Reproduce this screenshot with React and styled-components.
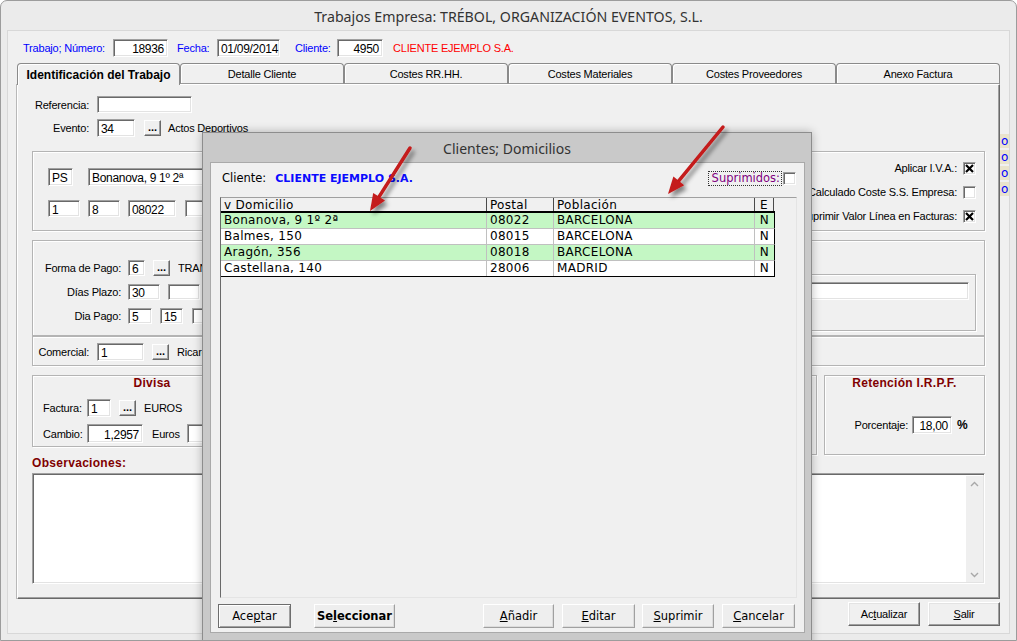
import React from "react";
import styled, { createGlobalStyle } from "styled-components";

const SANS = `"Liberation Sans", Arial, sans-serif`;
const TAHOMA = `"DejaVu Sans", Verdana, sans-serif`;
const UI = `"Noto Sans", "Open Sans", sans-serif`;

const GlobalStyle = createGlobalStyle`
  html, body { margin: 0; padding: 0; background: #ffffff; }
  body { font-family: ${SANS}; }
  *, *::before, *::after { box-sizing: border-box; }
`;

const Window = styled.div`
  position: relative;
  width: 1017px;
  height: 641px;
  background: #ebebeb;
  border: 1px solid #9c9c9c;
  border-radius: 7px 7px 0 0;
  overflow: hidden;
  display: flex;
  flex-direction: column;
`;

const TitleBar = styled.div`
  height: 30px;
  flex: none;
  display: flex;
  align-items: center;
  justify-content: center;
  font: 14.2px ${UI};
  color: #333;
`;

const ClientArea = styled.div`
  margin-left: 7px;
  width: 1001px;
  height: 602px;
  flex: none;
  background: #f0f0f0;
  box-shadow: 0 0 0 1px #d8d8d8;
  font: 11px ${SANS};
  letter-spacing: -0.2px;
  color: #000;
  display: flex;
  flex-direction: column;
`;

const HeaderRow = styled.div`
  display: flex;
  align-items: center;
  height: 18px;
  margin-top: 8px;
  padding-left: 15px;
`;

const LabelBox = styled.div`
  width: ${(p) => p.$w}px;
  flex: none;
  padding-left: ${(p) => p.$pl || 0}px;
  padding-right: ${(p) => p.$pr || 0}px;
  text-align: ${(p) => (p.$right ? "right" : "left")};
  color: ${(p) => p.$color || "#000"};
  white-space: nowrap;
`;

const Text = styled.span`
  margin-left: ${(p) => p.$ml || 0}px;
  color: ${(p) => p.$color || "#000"};
  font-weight: ${(p) => (p.$bold ? "bold" : "normal")};
  font-size: ${(p) => p.$size || 11}px;
  white-space: nowrap;
  flex: none;
  ${(p) => (p.$clip ? `width: ${p.$clip}px; overflow: hidden;` : "")}
`;

const Field = styled.div`
  width: ${(p) => p.$w}px;
  height: ${(p) => p.$h || 18}px;
  margin-left: ${(p) => p.$ml || 0}px;
  flex: none;
  background: #fff;
  border: 1px solid;
  border-color: #a0a0a0 #ffffff #ffffff #a0a0a0;
  box-shadow: inset 1px 1px 0 #696969, inset -1px -1px 0 #e3e3e3;
  display: flex;
  align-items: center;
  justify-content: ${(p) => (p.$right ? "flex-end" : "flex-start")};
  padding: 2px 3px 0 3px;
  font-size: 12px;
  letter-spacing: -0.3px;
  overflow: hidden;
  white-space: nowrap;
`;

const TabStrip = styled.div`
  display: flex;
  align-items: flex-start;
  height: 21px;
  margin-top: 6px;
  padding-left: 9px;
`;

const Tab = styled.div`
  width: ${(p) => p.$w}px;
  height: ${(p) => (p.$active ? 22 : 21)}px;
  flex: none;
  position: relative;
  z-index: ${(p) => (p.$active ? 2 : 1)};
  background: #f0f0f0;
  border: 1px solid #8a8a8a;
  border-bottom: ${(p) => (p.$active ? "none" : "1px solid #9a9a9a")};
  border-radius: 4px 4px 0 0;
  box-shadow: inset 1px 1px 0 #fff;
  display: flex;
  align-items: center;
  justify-content: center;
  font-size: ${(p) => (p.$active ? 12 : 11)}px;
  font-weight: ${(p) => (p.$active ? "bold" : "normal")};
  letter-spacing: ${(p) => (p.$active ? "0" : "-0.2px")};
  padding-top: ${(p) => (p.$active ? 1 : 0)}px;
`;

const PanelRow = styled.div`
  display: flex;
  align-items: flex-start;
`;

const Panel = styled.div`
  margin-left: 9px;
  width: 983px;
  height: 515px;
  flex: none;
  border-style: solid;
  border-width: 1px;
  border-color: #ffffff #696969 #696969 #ffffff;
  box-shadow: inset -1px -1px 0 #a0a0a0, -1px 0 0 #b8b8b8;
  padding: 11px 0 0 14px;
  display: flex;
  flex-direction: column;
`;

const Strip = styled.div`
  margin-left: 0;
  margin-top: 50px;
  width: 9px;
  display: flex;
  flex-direction: column;
  gap: 2px;
`;

const StripCell = styled.div`
  height: 14px;
  background: #e9e3cc;
  color: #0000ff;
  font: 12px ${TAHOMA};
  line-height: 14px;
  overflow: hidden;
  padding-left: 1px;
`;

const FormRow = styled.div`
  display: flex;
  align-items: center;
  height: ${(p) => p.$h || 18}px;
  margin-top: ${(p) => p.$mt || 0}px;
`;

const DotsBtn = styled.div`
  width: 17px;
  height: 16px;
  margin-left: ${(p) => p.$ml || 0}px;
  flex: none;
  background: #f0f0f0;
  border: 1px solid;
  border-color: #ffffff #696969 #696969 #ffffff;
  box-shadow: inset -1px -1px 0 #a0a0a0;
  font: bold 11px ${SANS};
  letter-spacing: 0;
  display: flex;
  align-items: flex-end;
  justify-content: center;
  line-height: 1;
  padding-bottom: 2px;
`;

const Group = styled.div`
  width: ${(p) => p.$w || 953}px;
  height: ${(p) => p.$h}px;
  margin-top: ${(p) => p.$mt || 0}px;
  margin-left: ${(p) => p.$ml || 0}px;
  flex: none;
  border: 1px solid #b4b4b4;
  box-shadow: inset 1px 1px 0 #fff, 1px 1px 0 #fff;
  display: flex;
  flex-direction: ${(p) => (p.$col ? "column" : "row")};
  justify-content: ${(p) => (p.$spread ? "space-between" : "flex-start")};
`;

const GroupCol = styled.div`
  display: flex;
  flex-direction: column;
  padding: ${(p) => p.$pad};
`;

const CheckRow = styled.div`
  display: flex;
  align-items: center;
  justify-content: flex-end;
  height: 24px;
`;

const CheckBox = styled.div`
  width: 13px;
  height: 13px;
  margin-left: ${(p) => p.$ml ?? 6}px;
  flex: none;
  background: #fff;
  border: 1px solid;
  border-color: #a0a0a0 #ffffff #ffffff #a0a0a0;
  box-shadow: inset 1px 1px 0 #696969, inset -1px -1px 0 #e3e3e3;
  display: flex;
  align-items: center;
  justify-content: center;
`;

const InnerBox = styled.div`
  width: 376px;
  height: 57px;
  margin: 33px 8px 0 auto;
  border: 1px solid #b4b4b4;
  box-shadow: inset 1px 1px 0 #fff, 1px 1px 0 #fff;
  padding: 7px 7px 0 15px;
  flex: none;
`;

const BottomRow = styled.div`
  display: flex;
  align-items: flex-start;
  margin-top: 9px;
`;

const GroupTitle = styled.div`
  height: 16px;
  line-height: 16px;
  text-align: center;
  font: bold 12px ${SANS};
  letter-spacing: 0.3px;
  color: #800000;
`;

const SectionLabel = styled.div`
  height: 14px;
  line-height: 14px;
  margin-top: 1px;
  font: bold 12px ${SANS};
  letter-spacing: 0.3px;
  color: #800000;
`;

const TextArea = styled.div`
  width: 953px;
  height: 111px;
  margin-top: 3px;
  background: #fff;
  border: 1px solid;
  border-color: #a0a0a0 #ffffff #ffffff #a0a0a0;
  box-shadow: inset 1px 1px 0 #696969, inset -1px -1px 0 #e3e3e3;
  display: flex;
  justify-content: flex-end;
  padding: 2px 1px 1px 2px;
`;

const ScrollBar = styled.div`
  width: 17px;
  background: #efefef;
  display: flex;
  flex-direction: column;
  justify-content: space-between;
  align-items: center;
  padding: 5px 0 4px;
`;

const ButtonBar = styled.div`
  display: flex;
  justify-content: flex-end;
  gap: 8px;
  padding-right: 9px;
  margin-top: 3px;
`;

const WinButton = styled.div`
  width: ${(p) => p.$w}px;
  height: 24px;
  background: #f0f0f0;
  border: 1px solid;
  border-color: #ffffff #696969 #696969 #ffffff;
  box-shadow: inset -1px -1px 0 #a0a0a0, inset 1px 1px 0 #e3e3e3;
  display: flex;
  align-items: center;
  justify-content: center;
  font-size: 11px;
`;

/* ---------- dialog ---------- */

const Dialog = styled.div`
  position: absolute;
  left: 201px;
  top: 131px;
  width: 610px;
  height: 520px;
  z-index: 5;
  background: #c9c9c9;
  border: 1px solid #8d8d8d;
  box-shadow: 0 0 9px rgba(0, 0, 0, 0.28);
  display: flex;
  flex-direction: column;
`;

const DialogTitle = styled.div`
  height: 29px;
  flex: none;
  display: flex;
  align-items: center;
  justify-content: center;
  font: 14px ${UI};
  color: #333;
  padding-top: 2px;
`;

const DialogBody = styled.div`
  margin-left: 7px;
  width: 595px;
  height: 471px;
  flex: none;
  background: #f0f0f0;
  border: 1px solid #a9a9a9;
  display: flex;
  flex-direction: column;
  font: 11.5px ${TAHOMA};
  color: #000;
`;

const DlgTop = styled.div`
  display: flex;
  align-items: center;
  justify-content: space-between;
  height: 16px;
  margin-top: 7px;
  padding: 0 8px 0 11px;
`;

const SideBox = styled.div`
  display: flex;
  align-items: center;
`;

const ClientName = styled.span`
  margin-left: 9px;
  font: bold 11px ${TAHOMA};
  color: #0a0aff;
`;

const FocusLabel = styled.div`
  width: 74px;
  height: 15px;
  border: 1px dotted #333;
  color: #800080;
  display: flex;
  align-items: center;
  justify-content: flex-end;
  padding-right: 1px;
`;

const GridBox = styled.div`
  width: 577px;
  height: 401px;
  margin: 11px 0 0 9px;
  flex: none;
  background: #f0f0f0;
  border: 1px solid;
  border-color: #a0a0a0 #e4e4e4 #e4e4e4 #696969;
`;

const GridRow = styled.div`
  display: grid;
  grid-template-columns: 266px 67px 201px 19px;
  width: 554px;
  height: ${(p) => (p.$head ? 15 : 16)}px;
  background: ${(p) => (p.$head ? "#f0f0f0" : p.$green ? "#c4f7c4" : "#ffffff")};
  border-bottom: ${(p) => (p.$head ? "2px solid #000" : p.$last ? "1px solid #000" : "1px solid #c0c0c0")};
  border-right: ${(p) => (p.$head ? "none" : "1px solid #000")};
  font-size: 12px;
  letter-spacing: 0.3px;
`;

const GridCell = styled.div`
  border-right: 1px solid ${(p) => (p.$head ? "#4a4a4a" : "#c0c0c0")};
  padding-left: ${(p) => (p.$center ? 0 : 3)}px;
  text-align: ${(p) => (p.$center ? "center" : "left")};
  line-height: 15px;
  white-space: nowrap;
  overflow: hidden;
  &:last-child {
    border-right: ${(p) => (p.$head ? "1px solid #4a4a4a" : "none")};
  }
`;

const DlgButtons = styled.div`
  display: flex;
  margin-top: 6px;
  padding-left: 7px;
`;

const DlgButton = styled.div`
  width: ${(p) => p.$w}px;
  height: 24px;
  margin-left: ${(p) => p.$ml || 0}px;
  flex: none;
  background: #eeeeee;
  border: 1px solid;
  border-color: ${(p) => (p.$default ? "#6d6d6d" : "#ffffff #a0a0a0 #a0a0a0 #ffffff")};
  box-shadow: ${(p) =>
    p.$default ? "inset 1px 1px 0 #fff, inset -1px -1px 0 #a0a0a0" : "inset -1px -1px 0 #dcdcdc"};
  display: flex;
  align-items: center;
  justify-content: center;
  font-weight: ${(p) => (p.$bold ? "bold" : "normal")};
  font-size: 11.5px;
`;

const ArrowLayer = styled.svg`
  position: absolute;
  left: -1px;
  top: -1px;
  z-index: 10;
  pointer-events: none;
`;

const XMark = () => (
  <svg width="9" height="9" viewBox="0 0 9 9">
    <path d="M1 1 L8 8 M8 1 L1 8" stroke="#000" strokeWidth="2.2" />
  </svg>
);

const Chevron = ({ up }) => (
  <svg width="9" height="6" viewBox="0 0 9 6">
    <path d={up ? "M1 5 L4.5 1.5 L8 5" : "M1 1 L4.5 4.5 L8 1"} stroke="#a8a8a8" strokeWidth="1.4" fill="none" />
  </svg>
);

function arrow(tx, ty, hx, hy) {
  const dx = hx - tx;
  const dy = hy - ty;
  const d = Math.hypot(dx, dy);
  const ux = dx / d;
  const uy = dy / d;
  const len = 17;
  const w = 7;
  const bx = hx - ux * len;
  const by = hy - uy * len;
  const px = -uy;
  const py = ux;
  return {
    line: `M${tx} ${ty} L${bx + ux * 2} ${by + uy * 2}`,
    head: `${hx},${hy} ${bx + px * w},${by + py * w} ${bx - px * w},${by - py * w}`,
  };
}

const Arrows = () => {
  const a1 = arrow(410, 148, 370, 211);
  const a2 = arrow(723, 127, 668, 194);
  return (
    <ArrowLayer width="1017" height="641" viewBox="0 0 1017 641">
      <defs>
        <filter id="sh" x="-50%" y="-50%" width="200%" height="200%">
          <feDropShadow dx="3" dy="4" stdDeviation="2" floodColor="#000" floodOpacity="0.45" />
        </filter>
      </defs>
      {[a1, a2].map((a, i) => (
        <g key={i} filter="url(#sh)">
          <path d={a.line} stroke="#c41a1a" strokeWidth="3.5" strokeLinecap="round" fill="none" />
          <polygon points={a.head} fill="#c41a1a" />
        </g>
      ))}
    </ArrowLayer>
  );
};

const rows = [
  ["Bonanova, 9 1º 2ª", "08022", "BARCELONA", "N"],
  ["Balmes, 150", "08015", "BARCELONA", "N"],
  ["Aragón, 356", "08018", "BARCELONA", "N"],
  ["Castellana, 140", "28006", "MADRID", "N"],
];

const tabs = [
  ["Identificación del Trabajo", 163, true],
  ["Detalle Cliente", 164],
  ["Costes RR.HH.", 164],
  ["Costes Materiales", 164],
  ["Costes Proveedores", 164],
  ["Anexo Factura", 164],
];

export default function App() {
  return (
    <>
      <GlobalStyle />
      <Window>
        <TitleBar>Trabajos Empresa: TRÉBOL, ORGANIZACIÓN EVENTOS, S.L.</TitleBar>
        <ClientArea>
          <HeaderRow>
            <LabelBox $w={90} $color="#0000ff">Trabajo; Número:</LabelBox>
            <Field $w={55} $right>18936</Field>
            <LabelBox $w={49} $pl={9} $color="#0000ff">Fecha:</LabelBox>
            <Field $w={63}>01/09/2014</Field>
            <LabelBox $w={57} $pl={15} $color="#0000ff">Cliente:</LabelBox>
            <Field $w={46} $right>4950</Field>
            <Text $ml={10} $color="#ff0000">CLIENTE EJEMPLO S.A.</Text>
          </HeaderRow>

          <TabStrip>
            {tabs.map(([t, w, a]) => (
              <Tab key={t} $w={w} $active={a}>{t}</Tab>
            ))}
          </TabStrip>

          <PanelRow>
            <Panel>
              <FormRow $h={17}>
                <LabelBox $w={57} $right>Referencia:</LabelBox>
                <Field $w={95} $h={17} $ml={8} />
              </FormRow>
              <FormRow $h={18} $mt={6}>
                <LabelBox $w={57} $right>Evento:</LabelBox>
                <Field $w={38} $ml={8}>34</Field>
                <DotsBtn $ml={9}>...</DotsBtn>
                <Text $ml={7}>Actos Deportivos</Text>
              </FormRow>

              <Group $h={80} $mt={14} $spread>
                <GroupCol $pad="16px 0 0 15px">
                  <FormRow $h={18}>
                    <Field $w={25}>PS</Field>
                    <Field $w={160} $ml={15}>Bonanova, 9 1º 2ª</Field>
                  </FormRow>
                  <FormRow $h={17} $mt={14}>
                    <Field $w={32} $h={17}>1</Field>
                    <Field $w={32} $h={17} $ml={8}>8</Field>
                    <Field $w={48} $h={17} $ml={8}>08022</Field>
                    <Field $w={50} $h={17} $ml={9} />
                  </FormRow>
                </GroupCol>
                <GroupCol $pad="4px 8px 0 0">
                  <CheckRow>
                    Aplicar I.V.A.:
                    <CheckBox><XMark /></CheckBox>
                  </CheckRow>
                  <CheckRow>
                    Calculado Coste S.S. Empresa:
                    <CheckBox />
                  </CheckRow>
                  <CheckRow>
                    Suprimir Valor Línea en Facturas:
                    <CheckBox><XMark /></CheckBox>
                  </CheckRow>
                </GroupCol>
              </Group>

              <Group $h={96} $mt={9}>
                <GroupCol $pad="19px 0 0 0">
                  <FormRow $h={16}>
                    <LabelBox $w={88} $right>Forma de Pago:</LabelBox>
                    <Field $w={17} $h={16} $ml={7}>6</Field>
                    <DotsBtn $ml={8}>...</DotsBtn>
                    <Text $ml={8} $clip={25}>TRANSFERENCIA BANCARIA</Text>
                  </FormRow>
                  <FormRow $h={16} $mt={8}>
                    <LabelBox $w={88} $right>Días Plazo:</LabelBox>
                    <Field $w={32} $h={16} $ml={7}>30</Field>
                    <Field $w={32} $h={16} $ml={8} />
                  </FormRow>
                  <FormRow $h={16} $mt={8}>
                    <LabelBox $w={88} $right>Dia Pago:</LabelBox>
                    <Field $w={24} $h={16} $ml={7}>5</Field>
                    <Field $w={23} $h={16} $ml={8}>15</Field>
                    <Field $w={24} $h={16} $ml={9} />
                  </FormRow>
                </GroupCol>
                <InnerBox>
                  <Field $w={353} $h={18} />
                </InnerBox>
              </Group>

              <Group $h={30}>
                <GroupCol $pad="6px 0 0 0">
                  <FormRow $h={18}>
                    <LabelBox $w={56} $right>Comercial:</LabelBox>
                    <Field $w={47} $ml={8}>1</Field>
                    <DotsBtn $ml={8}>...</DotsBtn>
                    <Text $ml={8} $clip={25}>Ricardo Pérez</Text>
                  </FormRow>
                </GroupCol>
              </Group>

              <BottomRow>
                <Group $w={240} $h={72} $col>
                  <GroupTitle>Divisa</GroupTitle>
                  <FormRow $h={18} $mt={7}>
                    <LabelBox $w={54} $pl={10}>Factura:</LabelBox>
                    <Field $w={24}>1</Field>
                    <DotsBtn $ml={8}>...</DotsBtn>
                    <Text $ml={8}>EUROS</Text>
                  </FormRow>
                  <FormRow $h={19} $mt={7}>
                    <LabelBox $w={54} $pl={10}>Cambio:</LabelBox>
                    <Field $w={56} $h={19} $right>1,2957</Field>
                    <Text $ml={9}>Euros</Text>
                    <Field $w={50} $h={19} $ml={7} />
                  </FormRow>
                </Group>
                <Group $w={539} $h={80} $ml={6} />
                <Group $w={161} $h={80} $ml={7} $col>
                  <GroupTitle>Retención I.R.P.F.</GroupTitle>
                  <FormRow $h={18} $mt={24}>
                    <LabelBox $w={83} $right>Porcentaje:</LabelBox>
                    <Field $w={40} $ml={4} $right>18,00</Field>
                    <Text $ml={5} $bold $size={12}>%</Text>
                  </FormRow>
                </Group>
              </BottomRow>

              <SectionLabel>Observaciones:</SectionLabel>
              <TextArea>
                <ScrollBar>
                  <Chevron up />
                  <Chevron />
                </ScrollBar>
              </TextArea>
            </Panel>
            <Strip>
              <StripCell>o</StripCell>
              <StripCell>o</StripCell>
              <StripCell>o</StripCell>
              <StripCell>o</StripCell>
            </Strip>
          </PanelRow>

          <ButtonBar>
            <WinButton $w={72}>Ac<u>t</u>ualizar</WinButton>
            <WinButton $w={72}><u>S</u>alir</WinButton>
          </ButtonBar>
        </ClientArea>

        <Dialog>
          <DialogTitle>Clientes; Domicilios</DialogTitle>
          <DialogBody>
            <DlgTop>
              <div>
                Cliente:<ClientName>CLIENTE EJEMPLO S.A.</ClientName>
              </div>
              <SideBox>
                <FocusLabel>Suprimidos:</FocusLabel>
                <CheckBox $ml={1} />
              </SideBox>
            </DlgTop>
            <GridBox>
              <GridRow $head>
                <GridCell $head>v Domicilio</GridCell>
                <GridCell $head>Postal</GridCell>
                <GridCell $head>Población</GridCell>
                <GridCell $head $center>E</GridCell>
              </GridRow>
              {rows.map((r, i) => (
                <GridRow key={i} $green={i % 2 === 0} $last={i === rows.length - 1}>
                  <GridCell>{r[0]}</GridCell>
                  <GridCell>{r[1]}</GridCell>
                  <GridCell>{r[2]}</GridCell>
                  <GridCell $center>{r[3]}</GridCell>
                </GridRow>
              ))}
            </GridBox>
            <DlgButtons>
              <DlgButton $w={73} $default>Ace<u>p</u>tar</DlgButton>
              <DlgButton $w={81} $ml={23} $bold>Se<u>l</u>eccionar</DlgButton>
              <DlgButton $w={71} $ml={88}><u>A</u>ñadir</DlgButton>
              <DlgButton $w={73} $ml={8}><u>E</u>ditar</DlgButton>
              <DlgButton $w={72} $ml={7}><u>S</u>uprimir</DlgButton>
              <DlgButton $w={73} $ml={8}><u>C</u>ancelar</DlgButton>
            </DlgButtons>
          </DialogBody>
        </Dialog>

        <Arrows />
      </Window>
    </>
  );
}
